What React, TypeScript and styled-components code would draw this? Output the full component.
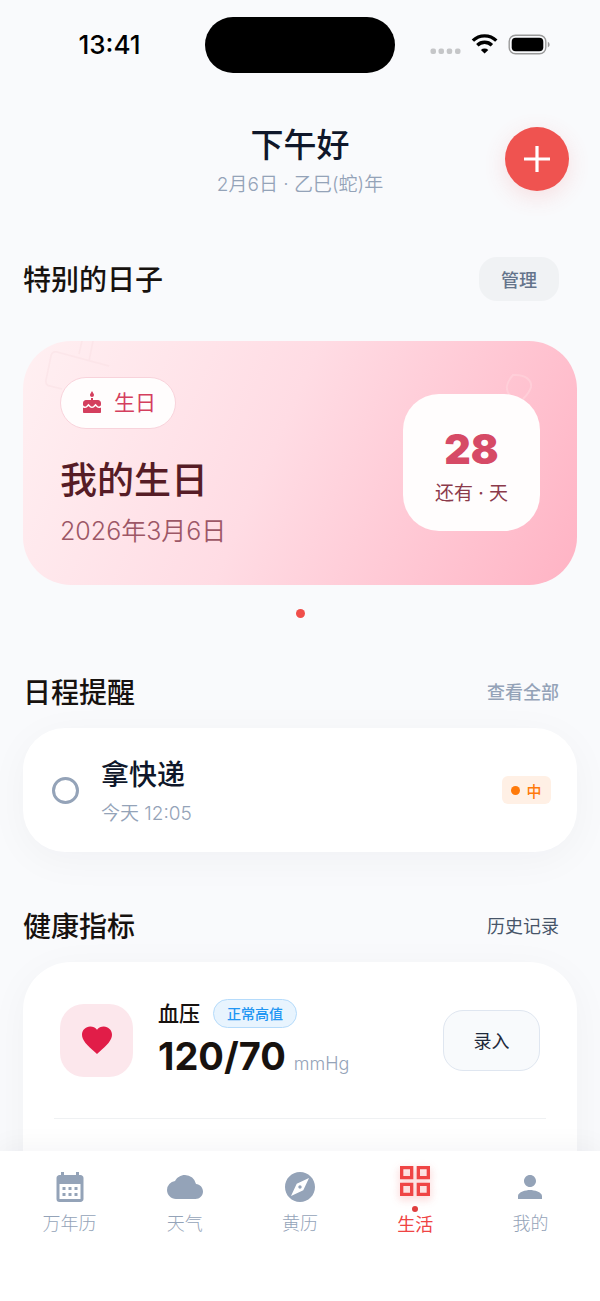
import React from 'react';
import styled, { createGlobalStyle, css } from 'styled-components';
import {
  MdCake,
  MdCalendarMonth,
  MdCloud,
  MdExplore,
  MdFavorite,
  MdGridView,
  MdPerson,
} from 'react-icons/md';

const GlobalStyle = createGlobalStyle`
  * { box-sizing: border-box; }
  body {
    margin: 0;
    background: #f9fafc;
    font-family: Inter, "Noto Sans CJK SC", sans-serif;
    color: #17120f;
  }
  h1, h2, h3, p { margin: 0; }
  button { font: inherit; padding: 0; border: 0; background: none; cursor: pointer; }
  a { color: inherit; text-decoration: none; }
`;

const Screen = styled.div`
  display: flex;
  flex-direction: column;
  height: 100vh;
  overflow: hidden;
`;

const StatusBar = styled.div`
  flex: none;
  display: grid;
  grid-template-columns: 1fr 190px 1fr;
  align-items: center;
  padding-top: 17px;
`;

const Clock = styled.span`
  padding-left: 14px;
  text-align: center;
  font-size: 26px;
  font-weight: 500;
  line-height: 32px;
  color: #000;
`;

const Island = styled.div`
  height: 56px;
  border-radius: 28px;
  background: #000;
`;

const StatusIcons = styled.div`
  display: flex;
  align-items: center;
  justify-content: flex-end;
  padding-right: 48px;
`;

const Content = styled.main`
  flex: 1;
  min-height: 0;
  overflow-y: auto;
  scrollbar-width: none;
`;

const Header = styled.header`
  display: grid;
  grid-template-columns: 1fr auto 1fr;
  align-items: start;
  padding: 50px 31px 0;
`;

const Greeting = styled.div`
  grid-column: 2;
  text-align: center;
`;

const Title = styled.h1`
  font-size: 33px;
  font-weight: 500;
  line-height: 44px;
  color: #0f172a;
`;

const Subtitle = styled.p`
  font-size: 19px;
  font-weight: 350;
  line-height: 36px;
  color: #94a3b8;
`;

const AddButton = styled.button`
  justify-self: end;
  display: grid;
  place-items: center;
  width: 64px;
  height: 64px;
  margin-top: 4px;
  border-radius: 50%;
  background: #ef5350;
  box-shadow: 0 6px 22px rgba(239, 83, 80, 0.16);
`;

const Section = styled.section<{ $top: number }>`
  padding: ${(p) => p.$top}px 23px 0;
`;

const SectionHead = styled.div<{ $gap: number }>`
  display: flex;
  align-items: center;
  justify-content: space-between;
  height: 44px;
  padding-right: 18px;
  margin-bottom: ${(p) => p.$gap}px;
`;

const SectionTitle = styled.h2`
  padding-top: 2px;
  font-size: 28px;
  font-weight: 500;
  line-height: 40px;
`;

const ManageButton = styled.button`
  width: 80px;
  height: 44px;
  border-radius: 18px;
  background: #f0f2f4;
  font-size: 18px;
  font-weight: 500;
  color: #64748b;
`;

const TextLink = styled.a<{ $strong?: boolean }>`
  padding-top: 2px;
  font-size: 18px;
  font-weight: ${(p) => (p.$strong ? 400 : 500)};
  line-height: 24px;
  color: ${(p) => (p.$strong ? '#475569' : '#94a3b8')};
`;

const DayCard = styled.article`
  position: relative;
  display: flex;
  align-items: center;
  justify-content: space-between;
  height: 244px;
  padding: 0 37px 2px;
  border-radius: 48px;
  overflow: hidden;
  background: linear-gradient(114deg, #fff0f2 0%, #ffdce4 45%, #ffb3c4 100%);
`;

const Doodle = styled.svg`
  position: absolute;
  inset: 0;
`;

const DayInfo = styled.div`
  position: relative;
`;

const Chip = styled.span`
  display: inline-flex;
  align-items: center;
  gap: 10px;
  height: 52px;
  padding: 0 19px;
  border: 1px solid #f8d3db;
  border-radius: 26px;
  background: #fffdfd;
  font-size: 21px;
  line-height: 30px;
  color: #d43f5e;
`;

const DayName = styled.h3`
  margin-top: 28px;
  font-size: 37px;
  font-weight: 500;
  line-height: 48px;
  color: #561c26;
`;

const DayDate = styled.p`
  margin-top: 10px;
  font-size: 25px;
  font-weight: 350;
  line-height: 32px;
  color: #9d5766;
`;

const Countdown = styled.div`
  position: relative;
  display: flex;
  flex-direction: column;
  align-items: center;
  width: 137px;
  height: 137px;
  padding-top: 30px;
  border-radius: 36px;
  background: #fffdfd;
`;

const Days = styled.strong`
  font-size: 41px;
  font-weight: 900;
  line-height: 50px;
  color: #d64a66;
`;

const DaysLabel = styled.span`
  margin-top: 8px;
  font-size: 19px;
  line-height: 24px;
  color: #8b3a4b;
`;

const Pager = styled.div`
  display: flex;
  justify-content: center;
  padding-top: 24px;
`;

const Dot = styled.span<{ $size: number; $color: string }>`
  width: ${(p) => p.$size}px;
  height: ${(p) => p.$size}px;
  border-radius: 50%;
  background: ${(p) => p.$color};
`;

const Card = styled.div<{ $radius: number }>`
  border-radius: ${(p) => p.$radius}px;
  background: #fff;
  box-shadow: 0 8px 40px rgba(15, 23, 42, 0.04);
`;

const Reminder = styled.label`
  display: flex;
  align-items: center;
  height: 124px;
  padding: 0 26px 0 29px;
`;

const Check = styled.input`
  appearance: none;
  flex: none;
  width: 27px;
  height: 27px;
  margin: 0 22px 0 0;
  border: 3px solid #94a3b8;
  border-radius: 50%;
`;

const ReminderText = styled.span`
  flex: 1;
  display: flex;
  flex-direction: column;
  padding-top: 4px;
`;

const ReminderName = styled.span`
  font-size: 28px;
  font-weight: 500;
  line-height: 44px;
  color: #0f172a;
`;

const ReminderTime = styled.span`
  font-size: 19px;
  font-weight: 350;
  line-height: 34px;
  color: #94a3b8;
`;

const Priority = styled.span`
  display: flex;
  align-items: center;
  justify-content: center;
  gap: 6px;
  width: 49px;
  height: 28px;
  border-radius: 6px;
  background: #fff0e5;
  font-size: 15px;
  font-weight: 500;
  color: #ff7a0a;
`;

const HealthCard = styled(Card)`
  padding: 36px 31px 96px;
`;

const Metric = styled.div`
  display: flex;
  align-items: center;
  height: 84px;
  padding: 0 6px;
`;

const MetricIcon = styled.div`
  display: grid;
  place-items: center;
  width: 73px;
  height: 73px;
  margin-right: 25px;
  border-radius: 24px;
  background: #fce7ec;
  color: #e11d48;
`;

const MetricBody = styled.div`
  flex: 1;
  padding-top: 9px;
`;

const MetricName = styled.div`
  display: flex;
  align-items: center;
  gap: 13px;
  font-size: 21px;
  font-weight: 500;
  line-height: 30px;
`;

const Badge = styled.span`
  height: 29px;
  padding: 0 13px;
  border: 1px solid #b5dbfb;
  border-radius: 15px;
  background: #e8f4fe;
  font-size: 14px;
  line-height: 28px;
  color: #2196f3;
`;

const MetricValue = styled.div`
  display: flex;
  align-items: baseline;
  gap: 8px;
  font-size: 38px;
  font-weight: 700;
  line-height: 54px;
`;

const Unit = styled.span`
  font-size: 18px;
  font-weight: 350;
  color: #94a3b8;
`;

const RecordButton = styled.button`
  width: 97px;
  height: 61px;
  border: 1px solid #dfe6f0;
  border-radius: 20px;
  background: #f8fafc;
  font-size: 18px;
  font-weight: 400;
  color: #1e293b;
`;

const Divider = styled.hr`
  height: 1px;
  margin: 36px 0 0;
  border: 0;
  background: #eff1f3;
`;

const TabBar = styled.nav`
  position: relative;
  flex: none;
  display: grid;
  grid-template-columns: repeat(5, 1fr);
  height: 150px;
  padding: 12px 12px 0;
  background: #fff;
  box-shadow: 0 -6px 24px rgba(15, 23, 42, 0.04);
`;

const Tab = styled.a<{ $active?: boolean }>`
  display: flex;
  flex-direction: column;
  align-items: center;
  padding-top: 6px;
  font-size: 18px;
  font-weight: 300;
  line-height: 24px;
  color: #94a3b8;

  svg { margin-bottom: 7px; }

  ${(p) =>
    p.$active &&
    css`
      padding-top: 0;
      font-weight: 400;
      color: #ef4444;

      svg {
        margin: -2px 0 5px;
        filter: drop-shadow(0 3px 4px rgba(239, 68, 68, 0.35));
      }
    `}
`;

const TabLabel = styled.span<{ $active?: boolean }>`
  padding-top: ${(p) => (p.$active ? 1 : 0)}px;
`;

const tabs = [
  { label: '万年历', Icon: MdCalendarMonth },
  { label: '天气', Icon: MdCloud },
  { label: '黄历', Icon: MdExplore },
  { label: '生活', Icon: MdGridView, active: true },
  { label: '我的', Icon: MdPerson },
];

const SystemIcons = () => (
  <svg width="122" height="24" viewBox="0 0 122 24" aria-hidden="true">
    <g fill="#c5c6c8">
      <rect x="0.5" y="15.5" width="5.5" height="5.5" rx="2" />
      <rect x="8.5" y="15.5" width="5.5" height="5.5" rx="2" />
      <rect x="16.7" y="15.5" width="5.5" height="5.5" rx="2" />
      <rect x="25" y="15.5" width="5.5" height="5.5" rx="2" />
    </g>
    <g fill="none" stroke="#000" strokeWidth="3.4">
      <path d="M42.9 7.6a16.8 16.8 0 0 1 23.4 0" />
      <path d="M47.3 12.3a10.4 10.4 0 0 1 14.6 0" />
    </g>
    <path d="M54.6 20.6l-3.7-3.6a5.4 5.4 0 0 1 7.4 0z" fill="#000" />
    <rect x="79.2" y="2.2" width="36.6" height="18.6" rx="6.4" fill="none" stroke="#999" strokeWidth="1.4" />
    <rect x="81.7" y="4.7" width="31.6" height="13.6" rx="4" fill="#000" />
    <path d="M117.8 8.8c2.4 1 2.4 4.6 0 5.6z" fill="#999" />
  </svg>
);

export default function App() {
  return (
    <Screen>
      <GlobalStyle />
      <StatusBar>
        <Clock>13:41</Clock>
        <Island />
        <StatusIcons>
          <SystemIcons />
        </StatusIcons>
      </StatusBar>

      <Content>
        <Header>
          <Greeting>
            <Title>下午好</Title>
            <Subtitle>2月6日 · 乙巳(蛇)年</Subtitle>
          </Greeting>
          <AddButton aria-label="添加">
            <svg width="26" height="26" viewBox="0 0 26 26" stroke="#fff" strokeWidth="3.2">
              <path d="M13 0v26M0 13h26" />
            </svg>
          </AddButton>
        </Header>

        <Section $top={54}>
          <SectionHead $gap={40}>
            <SectionTitle>特别的日子</SectionTitle>
            <ManageButton>管理</ManageButton>
          </SectionHead>
          <DayCard>
            <Doodle width="554" height="244" viewBox="0 0 554 244" fill="none" aria-hidden="true">
              <path
                d="M59 0l-3 13M70 0l-4 20M86 25l-52-14q-5-1-6 4l-5 24q-1 5 4 6l12 3"
                stroke="#f9dfe4"
                strokeOpacity="0.5"
                strokeWidth="1.5"
              />
              <path
                d="M489 57c-8-8-6-15 1-23 13-1 19 6 18 12-1 4-5 9-8 12"
                stroke="#ffd3dc"
                strokeOpacity="0.7"
                strokeWidth="2"
              />
            </Doodle>
            <DayInfo>
              <Chip>
                <MdCake size={24} />
                生日
              </Chip>
              <DayName>我的生日</DayName>
              <DayDate>2026年3月6日</DayDate>
            </DayInfo>
            <Countdown>
              <Days>28</Days>
              <DaysLabel>还有 · 天</DaysLabel>
            </Countdown>
          </DayCard>
          <Pager>
            <Dot $size={9} $color="#f04e4a" />
          </Pager>
        </Section>

        <Section $top={52}>
          <SectionHead $gap={14}>
            <SectionTitle>日程提醒</SectionTitle>
            <TextLink href="#reminders">查看全部</TextLink>
          </SectionHead>
          <Card $radius={42}>
            <Reminder>
              <Check type="checkbox" />
              <ReminderText>
                <ReminderName>拿快递</ReminderName>
                <ReminderTime>今天 12:05</ReminderTime>
              </ReminderText>
              <Priority>
                <Dot $size={9} $color="#ff7a0a" />中
              </Priority>
            </Reminder>
          </Card>
        </Section>

        <Section $top={52}>
          <SectionHead $gap={14}>
            <SectionTitle>健康指标</SectionTitle>
            <TextLink href="#history" $strong>
              历史记录
            </TextLink>
          </SectionHead>
          <HealthCard $radius={48}>
            <Metric>
              <MetricIcon>
                <MdFavorite size={36} />
              </MetricIcon>
              <MetricBody>
                <MetricName>
                  血压<Badge>正常高值</Badge>
                </MetricName>
                <MetricValue>
                  120/70<Unit>mmHg</Unit>
                </MetricValue>
              </MetricBody>
              <RecordButton>录入</RecordButton>
            </Metric>
            <Divider />
          </HealthCard>
        </Section>
      </Content>

      <TabBar>
        {tabs.map(({ label, Icon, active }) => (
          <Tab key={label} href={`#${label}`} $active={active}>
            <Icon size={active ? 40 : 36} />
            {active && <Dot $size={6} $color="#e03e3e" />}
            <TabLabel $active={active}>{label}</TabLabel>
          </Tab>
        ))}
      </TabBar>
    </Screen>
  );
}
